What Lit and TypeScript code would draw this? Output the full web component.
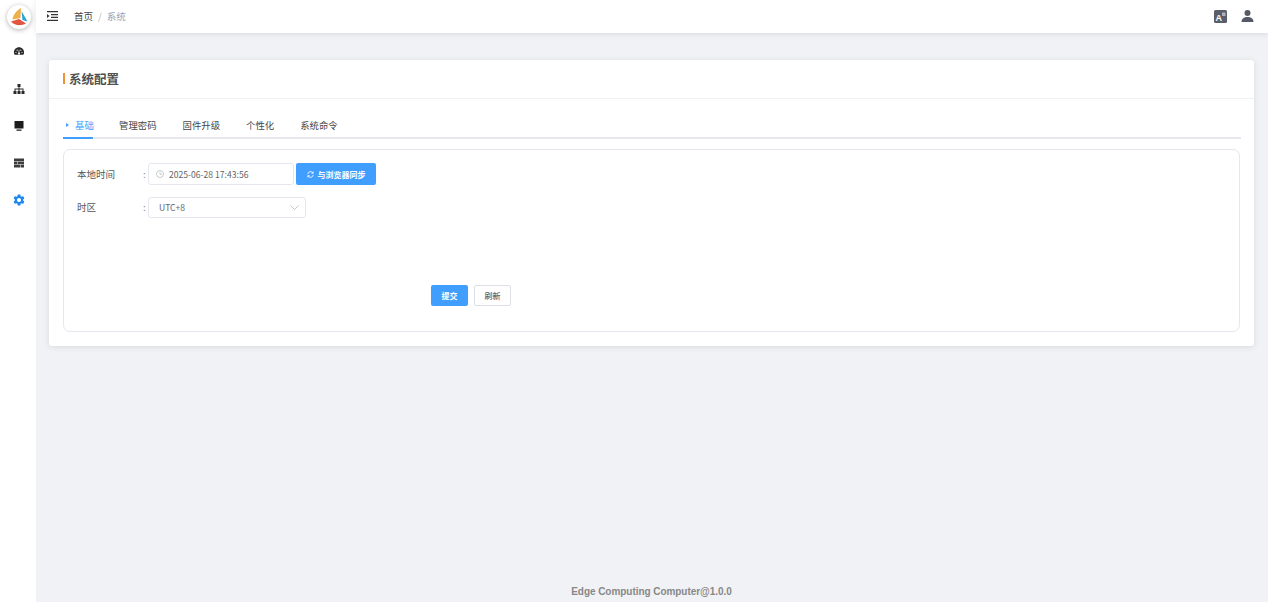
import { LitElement, html, css } from "lit";
import { customElement } from "lit/decorators.js";

@customElement("app-root")
export class AppRoot extends LitElement {
  static styles = css`
    :host { display: flex; width: 1268px; height: 602px; overflow: hidden; background: #f0f2f6; font-family: "Noto Sans CJK SC", "Noto Sans", sans-serif; color: #555; }
    * { box-sizing: border-box; }
    .side { width: 36px; flex: none; background: #fff; display: flex; flex-direction: column; align-items: center; }
    .logo { width: 24px; height: 24px; margin: 5px 0 0 2px; border-radius: 50%; background: #fff; box-shadow: 0 1px 5px rgba(0,0,0,.3); display: flex; align-items: center; justify-content: center; }
    .nav { margin: 16px 0 0 1px; display: flex; flex-direction: column; gap: 25.5px; align-items: center; }
    .nav svg { display: block; width: 12px; height: 12px; }
    .nav svg.tight { margin-top: -1px; }
    .main { flex: 1; min-width: 0; display: flex; flex-direction: column; }
    .top { height: 33px; flex: none; background: #fff; box-shadow: 0 1px 6px rgba(0,0,0,.1); display: flex; align-items: center; padding: 0 14px 1px 11px; position: relative; font-size: 9.5px; }
    .crumb { margin-left: 16px; color: #444; }
    .sep { margin: 0 5px; color: #b5b9c2; }
    .cur { color: #98a2b5; }
    .right { margin-left: auto; display: flex; align-items: center; gap: 14px; }
    .body { flex: 1; padding: 27px 14px 0 13px; display: flex; flex-direction: column; }
    .card { height: 286px; background: #fff; border-radius: 3px; box-shadow: 0 1px 6px rgba(0,0,0,.1); display: flex; flex-direction: column; }
    .chead { height: 39px; flex: none; border-bottom: 1px solid #f0f1f3; display: flex; align-items: center; padding: 0 0 2px 14px; font-size: 12.5px; font-weight: 700; color: #505050; }
    .bar { width: 2px; height: 11px; background: #f0913a; margin-right: 4px; }
    .cbody { flex: 1; padding: 14px 13px 14px 14px; display: flex; flex-direction: column; }
    .tabs { height: 26px; flex: none; display: flex; border-bottom: 2px solid #e6e8ee; font-size: 9.4px; color: #444; }
    .tab { margin-right: 26px; height: 26px; display: flex; align-items: center; padding-bottom: 2px; white-space: nowrap; }
    .tab.on { width: 30px; padding: 0 0 0 3px; gap: 6px; color: #409eff; border-bottom: 2px solid #409eff; }
    .tri { width: 0; height: 0; border-left: 3px solid #409eff; border-top: 2.5px solid transparent; border-bottom: 2.5px solid transparent; }
    .box { margin: 10px 1px 0 0; flex: 1; border: 1px solid #e4e7ed; border-radius: 7px; padding: 13px 13px 0; display: flex; flex-direction: column; font-size: 9.5px; }
    .row { display: flex; align-items: center; height: 22px; }
    .row + .row { margin-top: 11px; }
    .lab { width: 66px; color: #555; }
    .colon { width: 5px; color: #888; }
    .input { height: 22px; border: 1px solid #e4e7ed; border-radius: 3px; display: flex; align-items: center; color: #666; font-size: 8.6px; background: #fff; }
    .date { width: 146px; padding-left: 7px; gap: 5px; }
    .sel { width: 158px; height: 21px; padding: 0 6px 0 10px; justify-content: space-between; }
    .btn { height: 22px; border-radius: 2px; background: #409eff; color: #fff; display: flex; align-items: center; justify-content: center; font-size: 8px; font-weight: 700; }
    .sync { width: 80px; margin-left: 2px; gap: 4px; }
    .acts { display: flex; gap: 6px; margin: 67px 0 0 354px; }
    .acts .btn { width: 37px; height: 21px; }
    .btn.plain { background: #fff; border: 1px solid #dcdfe6; color: #666; font-weight: 500; }
    .foot { margin-top: auto; height: 21px; text-align: center; font: 700 10px "Liberation Sans", sans-serif; letter-spacing: -.05px; color: #888; line-height: 21px; }
  `;

  render() {
    return html`
      <aside class="side">
        <div class="logo">
          <svg width="18" height="18" viewBox="0 0 18 18">
            <path d="M11 0C6.500 2.500 3 7 2.500 11.500L10.500 10Z" fill="#eeb04a"/>
            <path d="M11.500 3L17.500 13.500L12.500 12Z" fill="#2aa3d8"/>
            <path d="M1 13.500L9 11L16 15.500C11 18 5 18 1 13.500Z" fill="#e2553f"/>
          </svg>
        </div>
        <nav class="nav">
          <svg viewBox="-1 -1 26 26" fill="#2a2a2a"><path fill-rule="evenodd" d="M12 4C5.400 4 1 9.500 1 15c0 2 .6 4 1.600 5h18.800c1-1 1.600-3 1.600-5 0-5.500-4.400-11-11-11zM5.500 14a1.200 1.200 0 1 0 0 2.400A1.200 1.200 0 0 0 5.500 14zm2.500-5a1.200 1.200 0 1 0 0 2.400A1.200 1.200 0 0 0 8 9zm8 0a1.200 1.200 0 1 0 0 2.400A1.200 1.200 0 0 0 16 9zm2.500 5a1.200 1.200 0 1 0 0 2.400 1.200 1.200 0 0 0 0-2.400zM11.600 9l-.5 6.200a2.200 2.200 0 1 0 1.800 0L12.400 9z"/></svg>
          <svg viewBox="0 0 24 24" fill="#2a2a2a"><path d="M9 2h6v6h-2v3h8v5h2v6h-6v-6h2v-3h-6v3h2v6H9v-6h2v-3H5v3h2v6H1v-6h2v-5h8V8H9z"/></svg>
          <svg viewBox="0 0 24 24" fill="#1c1c1c"><path d="M3 2h18v15H3zM7 19h10v2.500H7z"/></svg>
          <svg class="tight" viewBox="0 0 24 24" fill="#3c3c3c"><path fill-rule="evenodd" d="M2 3h20v18H2zM2 8.500v1h20v-1zM2 14v1h20v-1zM8.500 9.500v4.500h1V9.500zM14.500 15v6h1v-6z"/></svg>
          <svg viewBox="2.500 1.500 19 21" fill="#1a86ef"><path fill-rule="evenodd" d="M19.140 12.940c.04-.3.06-.61.06-.94 0-.32-.02-.64-.07-.94l2.030-1.580c.18-.14.23-.41.12-.61l-1.920-3.320c-.12-.22-.37-.29-.59-.22l-2.390.96c-.5-.38-1.030-.7-1.620-.94l-.36-2.540c-.04-.24-.24-.41-.48-.41h-3.840c-.24 0-.43.17-.47.41l-.36 2.540c-.59.24-1.130.57-1.620.94l-2.390-.96c-.22-.08-.47 0-.59.22L2.740 8.870c-.12.21-.08.47.12.61l2.030 1.580c-.05.3-.09.63-.09.94s.02.64.07.94l-2.030 1.580c-.18.14-.23.41-.12.61l1.920 3.320c.12.22.37.29.59.22l2.390-.96c.5.38 1.030.7 1.620.94l.36 2.540c.05.24.24.41.48.41h3.840c.24 0 .44-.17.47-.41l.36-2.540c.59-.24 1.130-.56 1.620-.94l2.390.96c.22.08.47 0 .59-.22l1.920-3.320c.12-.22.07-.47-.12-.61l-2.010-1.580zM12 15.600c-1.980 0-3.600-1.620-3.600-3.600s1.620-3.600 3.600-3.600 3.600 1.620 3.600 3.600-1.620 3.600-3.600 3.600z"/></svg>
        </nav>
      </aside>
      <div class="main">
        <header class="top">
          <svg width="11" height="10" viewBox="0 0 11 10" fill="#333"><path d="M0 0h11v1.300H0zM4 2.900h7v1.300H4zM4 5.800h7v1.300H4zM0 8.700h11V10H0zM0 3l2.500 2L0 7z"/></svg>
          <span class="crumb">首页</span><span class="sep">/</span><span class="cur">系统</span>
          <div class="right">
            <svg width="13" height="13" viewBox="0 0 13 13"><rect width="13" height="13" rx="1.500" fill="#5a5e6a"/><text x="1.500" y="10.500" font-size="9" font-weight="700" fill="#fff" font-family="Liberation Sans">A</text><rect x="8" y="2.500" width="3.500" height="3.500" fill="#aeb1b8"/></svg>
            <svg width="13" height="12" viewBox="0 0 13 12" fill="#555a66"><circle cx="6.500" cy="3" r="3"/><path d="M0.500 12c0-3.500 2.500-5 6-5s6 1.500 6 5z"/></svg>
          </div>
        </header>
        <div class="body">
          <section class="card">
            <div class="chead"><span class="bar"></span>系统配置</div>
            <div class="cbody">
              <div class="tabs">
                <div class="tab on"><span class="tri"></span>基础</div>
                <div class="tab">管理密码</div>
                <div class="tab">固件升级</div>
                <div class="tab">个性化</div>
                <div class="tab">系统命令</div>
              </div>
              <div class="box">
                <div class="row">
                  <span class="lab">本地时间</span><span class="colon">:</span>
                  <div class="input date">
                    <svg width="8" height="8" viewBox="0 0 10 10" fill="none" stroke="#b4b8c2" stroke-width=".9"><circle cx="5" cy="5" r="4.400"/><path d="M5 2.300V5.300H7.500"/></svg>
                    <span>2025-06-28 17:43:56</span>
                  </div>
                  <div class="btn sync">
                    <svg width="7" height="7" viewBox="0 0 10 10" fill="none" stroke="#fff" stroke-width="1.200"><path d="M1 4.500A4 4 0 0 1 8.500 3M9 5.500A4 4 0 0 1 1.500 7"/><path d="M8.800 .8V3.300H6.300M1.200 9.200V6.700H3.700"/></svg>
                    <span>与浏览器同步</span>
                  </div>
                </div>
                <div class="row">
                  <span class="lab">时区</span><span class="colon">:</span>
                  <div class="input sel">
                    <span>UTC+8</span>
                    <svg width="9" height="5" viewBox="0 0 9 5" fill="none" stroke="#b4b8c2" stroke-width=".8"><path d="M.5 .5L4.500 4.500L8.500 .5"/></svg>
                  </div>
                </div>
                <div class="acts">
                  <div class="btn">提交</div>
                  <div class="btn plain">刷新</div>
                </div>
              </div>
            </div>
          </section>
          <footer class="foot">Edge Computing Computer@1.0.0</footer>
        </div>
      </div>
    `;
  }
}
